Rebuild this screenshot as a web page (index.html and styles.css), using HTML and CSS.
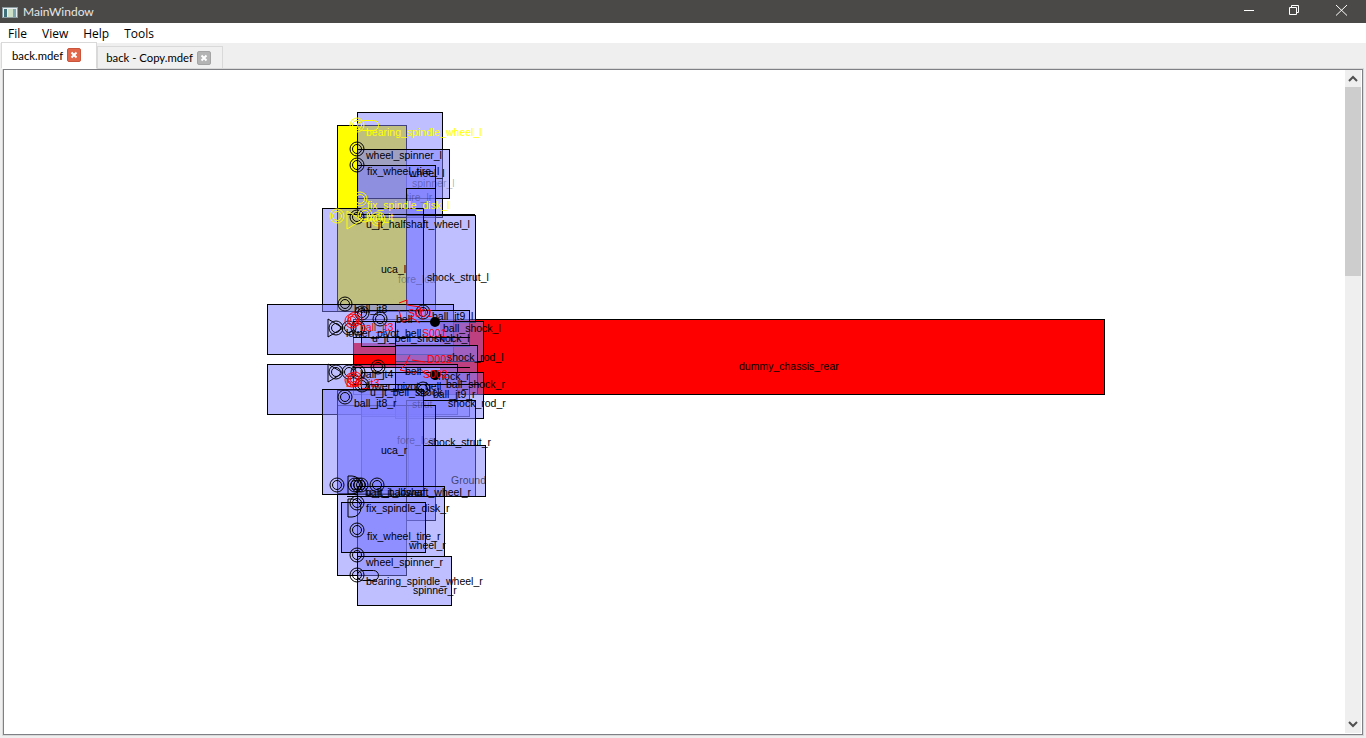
FILE: index.html
```html
<!DOCTYPE html>
<html lang="en">
<head>
    <meta charset="UTF-8">
    <title>MainWindow</title>
    <link rel="stylesheet" href="styles.css">
</head>
<body>
    <div class="titlebar">
        <svg class="app-icon" width="16" height="16" viewBox="0 0 16 16">
            <rect x="0.5" y="3.5" width="15" height="10" fill="#e8eef0" stroke="#8a9a9e"/>
            <rect x="2" y="5" width="3" height="8" fill="#3f6f78"/>
            <rect x="6" y="5" width="5" height="8" fill="#cfe0c8"/>
            <rect x="11" y="5" width="3" height="8" fill="#7fa6ae"/>
        </svg>
        <span class="title">MainWindow</span>
        <div class="win-buttons">
            <svg class="win-btn" width="46" height="23" viewBox="0 0 46 23"><path d="M18 10.5h10" stroke="#fff" fill="none"/></svg>
            <svg class="win-btn" width="46" height="23" viewBox="0 0 46 23"><path d="M17.5 7.5h7v7h-7zM19.5 7.5v-2h7v7h-2" stroke="#fff" fill="none"/></svg>
            <svg class="win-btn" width="46" height="23" viewBox="0 0 46 23"><path d="M18 5l11 10.500M29 5l-11 10.500" stroke="#fff" fill="none"/></svg>
        </div>
    </div>

    <div class="menubar">
        <span class="menu-item">File</span>
        <span class="menu-item">View</span>
        <span class="menu-item">Help</span>
        <span class="menu-item">Tools</span>
    </div>

    <div class="tabbar">
        <div class="tab tab-active">
            <span>back.mdef</span>
            <svg width="14" height="14" viewBox="0 0 14 14"><rect x="0.5" y="0.5" width="13" height="13" rx="1.5" fill="#e2664a" stroke="#c8553c"/><path d="M4.500 4.500l5 5M9.500 4.500l-5 5" stroke="#fff" stroke-width="2"/></svg>
        </div>
        <div class="tab">
            <span>back - Copy.mdef</span>
            <svg width="14" height="14" viewBox="0 0 14 14"><rect x="0.5" y="0.5" width="13" height="13" rx="1.5" fill="#b4b4b4" stroke="#a4a4a4"/><path d="M4.500 4.500l5 5M9.500 4.500l-5 5" stroke="#fff" stroke-width="2"/></svg>
        </div>
    </div>

    <div class="pane">
        <div class="view">
            <svg class="canvas" width="1341" height="662" viewBox="4 70 1341 662">
                <defs>
                    <g id="joint"><circle r="7"/><circle r="4.500"/></g>
                    <path id="rev" d="M0 -9l15 9l-15 9z"/>
                    <path id="dee" d="M0 -9h4a9 9 0 0 1 0 18h-4z"/>
                </defs>

                <!-- chassis and selected body sit under everything -->
                <path class="fill-red" d="M440 319H1105V394H440V367H353V343H440z"/>
                <rect class="edge" x="353.500" y="319.500" width="751" height="75"/>
                <rect class="solid-yellow" x="337.500" y="125.500" width="69" height="186"/>

                <g class="bodies">
                    <!-- left side -->
                    <rect x="357.500" y="112.500" width="85" height="105"/>
                    <rect x="357.500" y="149.500" width="92" height="49"/>
                    <rect x="357.500" y="165.500" width="78" height="52"/>
                    <rect x="406.500" y="188.500" width="29" height="122"/>
                    <rect x="406.500" y="215.500" width="69" height="107"/>
                    <rect x="322.500" y="208.500" width="101" height="103"/>
                    <rect x="267.500" y="304.500" width="186" height="50"/>
                    <rect x="361.500" y="310.500" width="108" height="36"/>
                    <rect x="395.500" y="321.500" width="88" height="40"/>
                    <rect x="395.500" y="345.500" width="82" height="49"/>
                    <!-- right side -->
                    <rect x="267.500" y="364.500" width="190" height="50"/>
                    <rect x="361.500" y="372.500" width="108" height="44"/>
                    <rect x="395.500" y="372.500" width="88" height="46"/>
                    <rect x="361.500" y="405.500" width="47" height="85"/>
                    <rect x="337.500" y="405.500" width="69" height="170"/>
                    <rect x="406.500" y="400.500" width="69" height="96"/>
                    <rect x="406.500" y="405.500" width="29" height="115"/>
                    <rect x="337.500" y="390.500" width="86" height="103"/>
                    <rect x="322.500" y="389.500" width="101" height="105"/>
                    <rect x="423.500" y="445.500" width="62" height="51"/>
                    <rect x="357.500" y="486.500" width="87" height="70"/>
                    <rect x="341.500" y="502.500" width="84" height="50"/>
                    <rect x="357.500" y="556.500" width="94" height="49"/>
                </g>

                <g class="outline">
                    <path d="M347 214.500H475M347 496.500H476M353 321.500H440M353 337.500H470M353 367.500H470M353 384.500H480"/>
                    <use href="#rev" x="328" y="328"/>
                    <use href="#rev" x="328" y="373"/>
                    <use href="#dee" x="348" y="485"/>
                    <use href="#dee" x="348" y="508"/>
                    <rect x="357.500" y="570.500" width="21" height="10" rx="5"/>
                    <use href="#joint" x="357" y="149"/>
                    <use href="#joint" x="357" y="165"/>
                    <use href="#joint" x="357" y="217"/>
                    <use href="#joint" x="345" y="304"/>
                    <use href="#joint" x="362" y="313"/>
                    <use href="#joint" x="380" y="319"/>
                    <use href="#joint" x="423" y="312"/>
                    <use href="#joint" x="336" y="328"/>
                    <use href="#joint" x="349" y="328"/>
                    <use href="#joint" x="358" y="328"/>
                    <use href="#joint" x="336" y="372"/>
                    <use href="#joint" x="349" y="372"/>
                    <use href="#joint" x="358" y="372"/>
                    <use href="#joint" x="378" y="367"/>
                    <use href="#joint" x="362" y="385"/>
                    <use href="#joint" x="423" y="389"/>
                    <use href="#joint" x="345" y="397"/>
                    <use href="#joint" x="337" y="485"/>
                    <use href="#joint" x="355" y="485"/>
                    <use href="#joint" x="358" y="485"/>
                    <use href="#joint" x="361" y="485"/>
                    <use href="#joint" x="377" y="485"/>
                    <use href="#joint" x="357" y="503"/>
                    <use href="#joint" x="357" y="530"/>
                    <use href="#joint" x="357" y="555"/>
                    <use href="#joint" x="357" y="575"/>
                </g>
                <circle class="blob" cx="435" cy="322" r="5"/>
                <circle class="blob" cx="435" cy="375" r="5"/>

                <g class="outline-yellow">
                    <use href="#joint" x="357" y="125"/>
                    <rect x="357.500" y="120.500" width="21" height="10" rx="5"/>
                    <use href="#joint" x="360" y="199"/>
                    <use href="#joint" x="337" y="216"/>
                    <use href="#joint" x="365" y="215"/>
                    <use href="#joint" x="378" y="219"/>
                    <use href="#rev" x="347" y="220"/>
                </g>

                <g class="outline-red">
                    <path d="M399 303l8 -3v5l13 2l2 13"/>
                    <path d="M399 310l3 12l10 -4l8 5"/>
                    <path d="M410 355l-5 10l-5 5l15 3l5 -4l10 8"/>
                    <path d="M412 360l13 2"/>
                    <use href="#joint" x="352" y="321"/>
                    <use href="#joint" x="355" y="319"/>
                    <use href="#joint" x="352" y="380"/>
                    <use href="#joint" x="355" y="379"/>
                </g>

                <!-- labels -->
                <g class="labels">
                    <text x="366" y="136" class="yellow">bearing_spindle_wheel_l</text>
                    <text x="366" y="159">wheel_spinner_l</text>
                    <text x="367" y="175">fix_wheel_tire_l</text>
                    <text x="409" y="177">wheel_l</text>
                    <text x="412" y="187" class="dim">spinner_l</text>
                    <text x="406" y="201" class="dim">tire_lr</text>
                    <text x="367" y="209" class="yellow">fix_spindle_disk_l</text>
                    <text x="366" y="221" class="yellow">ball_jt</text>
                    <text x="366" y="228">u_jt_halfshaft_wheel_l</text>
                    <text x="381" y="273">uca_l</text>
                    <text x="398" y="283" class="dim">fore_lca</text>
                    <text x="427" y="281">shock_strut_l</text>
                    <text x="354" y="313">ball_jt8</text>
                    <text x="432" y="320">ball_jt9_l</text>
                    <text x="396" y="323">bell</text>
                    <text x="443" y="332">ball_shock_l</text>
                    <text x="360" y="331" class="red">ball_jt3</text>
                    <text x="346" y="337">lower_pivot_bell</text>
                    <text x="372" y="342">u_jt_bell_shock_l</text>
                    <text x="434" y="342">shock_l</text>
                    <text x="408" y="317" class="red">S001</text>
                    <text x="422" y="337" class="red">S001</text>
                    <text x="447" y="361">shock_rod_l</text>
                    <text x="427" y="363" class="red">D002</text>
                    <text x="405" y="375">bell</text>
                    <text x="433" y="380">shock_r</text>
                    <text x="423" y="378" class="red">S002</text>
                    <text x="360" y="378">ball_jt4</text>
                    <text x="346" y="387" class="red">ball_jt3</text>
                    <text x="446" y="388">ball_shock_r</text>
                    <text x="370" y="396">u_jt_bell_shock</text>
                    <text x="366" y="390">lower_pivot_bell</text>
                    <text x="433" y="398">ball_jt9_r</text>
                    <text x="354" y="407">ball_jt8_r</text>
                    <text x="448" y="407">shock_rod_r</text>
                    <text x="412" y="408" class="dim">strut</text>
                    <text x="381" y="454">uca_r</text>
                    <text x="397" y="444" class="dim">fore_lca</text>
                    <text x="428" y="446">shock_strut_r</text>
                    <text x="451" y="484" class="dark">Ground</text>
                    <text x="366" y="496">u_jt_halfshaft_wheel_r</text>
                    <text x="365" y="496">ball_jt_lower</text>
                    <text x="366" y="512">fix_spindle_disk_r</text>
                    <text x="367" y="540">fix_wheel_tire_r</text>
                    <text x="409" y="549">wheel_r</text>
                    <text x="366" y="566">wheel_spinner_r</text>
                    <text x="366" y="585">bearing_spindle_wheel_r</text>
                    <text x="413" y="594">spinner_r</text>
                    <text x="739" y="370">dummy_chassis_rear</text>
                </g>
            </svg>
        </div>
        <div class="scrollbar">
            <svg class="arrow" width="16" height="17" viewBox="0 0 16 17"><path d="M4 11l4 -4l4 4" stroke="#505050" stroke-width="2" fill="none"/></svg>
            <div class="thumb"></div>
            <div class="track"></div>
            <svg class="arrow" width="16" height="17" viewBox="0 0 16 17"><path d="M4 6l4 4l4 -4" stroke="#505050" stroke-width="2" fill="none"/></svg>
        </div>
    </div>
</body>
</html>
```

FILE: styles.css
```css
html, body {
    margin: 0;
    padding: 0;
    height: 738px;
    overflow: hidden;
}

body {
    display: flex;
    flex-direction: column;
    background-color: #efefef;
    font-family: "Open Sans", "Noto Sans", sans-serif;
    font-size: 12px;
    color: #000;
}

.titlebar {
    display: flex;
    align-items: center;
    height: 23px;
    background-color: #4a4947;
    color: #e6e6e6;
}

.app-icon {
    margin-left: 2px;
    margin-right: 5px;
}

.title {
    font-family: Lato, sans-serif;
    font-size: 12px;
}

.win-buttons {
    display: flex;
    margin-left: auto;
    margin-right: 2px;
}

.win-btn {
    display: block;
}

.menubar {
    display: flex;
    gap: 15px;
    align-items: center;
    height: 20px;
    padding-left: 8px;
    background-color: #fff;
}

.tabbar {
    display: flex;
    align-items: flex-end;
    height: 25px;
    padding-left: 1px;
    font-family: Lato, sans-serif;
    font-size: 11.300px;
}

.tab {
    display: flex;
    align-items: center;
    gap: 4px;
    height: 21px;
    padding: 0 11px 0 8px;
    border: 1px solid #d9d9d9;
    border-bottom: 0;
    background-color: #f0f0f0;
}

.tab-active {
    height: 24px;
    padding: 0 15px 1px 10px;
    background-color: #fff;
    border-bottom: 1px solid #fff;
    margin-bottom: -1px;
    z-index: 1;
}

.pane {
    display: flex;
    height: 663px;
    margin: 0 2px;
    border: 1px solid #d9d9d9;
    outline: 1px solid #7f8085;
    outline-offset: -2px;
    padding: 1px 2px 2px 1px;
    background-color: #fff;
}

.view {
    flex: 1;
    min-width: 0;
    background-color: #fff;
}

.canvas {
    display: block;
}

.fill-red {
    fill: #f00;
}

.edge {
    fill: none;
    stroke: #000;
}

.solid-yellow {
    fill: #ff0;
    stroke: #000;
}

.bodies rect {
    fill: rgba(128, 128, 255, 0.5);
    stroke: #000;
}

.outline, .outline-yellow, .outline-red {
    fill: none;
    stroke: #000;
}

.outline-yellow {
    stroke: #ff0;
}

.outline-red {
    stroke: #f00;
}

.blob {
    fill: #000;
}

.labels {
    font-family: "Liberation Sans", Arial, sans-serif;
    font-size: 10.500px;
    fill: #000;
}

.labels .yellow {
    fill: #ff0;
}

.labels .red {
    fill: #f00;
}

.labels .dim {
    fill-opacity: 0.3;
}

.labels .dark {
    fill-opacity: 0.6;
}

.scrollbar {
    display: flex;
    flex-direction: column;
    width: 16px;
    flex-shrink: 0;
    background-color: #efefef;
}

.arrow {
    display: block;
    flex-shrink: 0;
}

.thumb {
    height: 189px;
    background-color: #cdcdcd;
}

.track {
    flex: 1;
}
```
